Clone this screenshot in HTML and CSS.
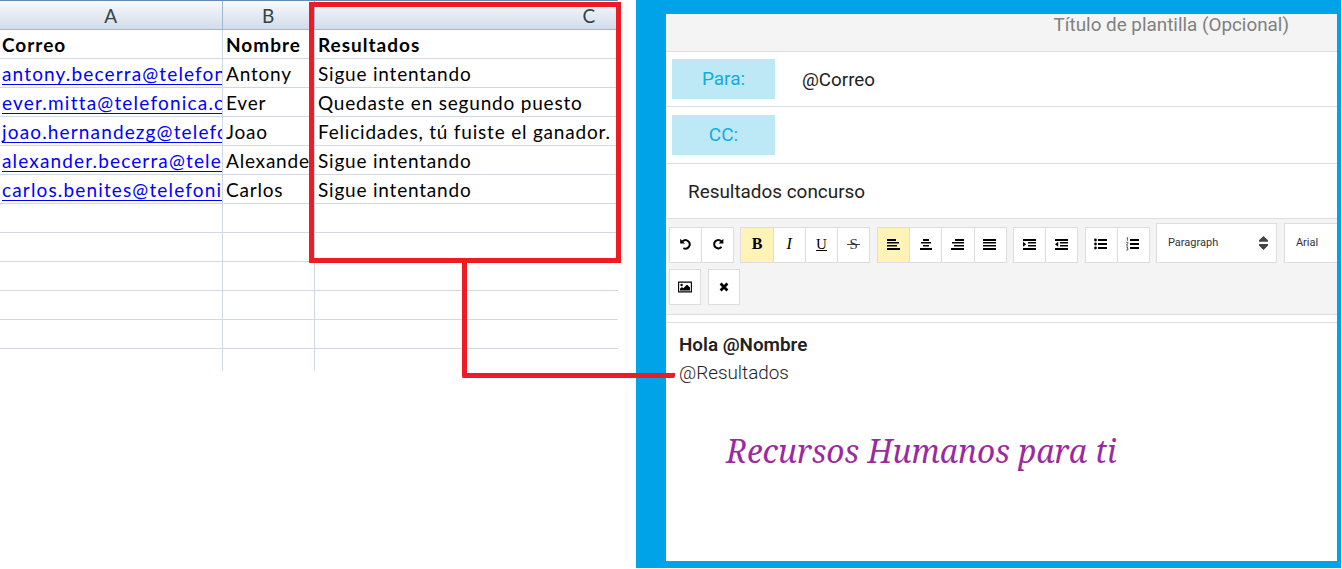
FILE: index.html
```html
<!DOCTYPE html>
<html lang="es">
<head>
<meta charset="utf-8">
<title>Resultados concurso</title>
<link rel="stylesheet" href="styles.css">
</head>
<body>
<main class="page">
  <section class="sheet">
    <div class="row head"><div class="cell">A</div><div class="cell">B</div><div class="cell col-c">C</div></div>
    <div class="row titles"><div class="cell">Correo</div><div class="cell">Nombre</div><div class="cell">Resultados</div></div>
    <div class="row"><div class="cell"><a class="mail">antony.becerra@telefon</a></div><div class="cell">Antony</div><div class="cell">Sigue intentando</div></div>
    <div class="row"><div class="cell"><a class="mail wide">ever.mitta@telefonica.c</a></div><div class="cell">Ever</div><div class="cell">Quedaste en segundo puesto</div></div>
    <div class="row"><div class="cell"><a class="mail">joao.hernandezg@telefo</a></div><div class="cell">Joao</div><div class="cell">Felicidades, tú fuiste el ganador.</div></div>
    <div class="row"><div class="cell"><a class="mail">alexander.becerra@telef</a></div><div class="cell">Alexande</div><div class="cell">Sigue intentando</div></div>
    <div class="row"><div class="cell"><a class="mail">carlos.benites@telefonic</a></div><div class="cell">Carlos</div><div class="cell">Sigue intentando</div></div>
    <div class="row"><div class="cell"></div><div class="cell"></div><div class="cell"></div></div>
    <div class="row"><div class="cell"></div><div class="cell"></div><div class="cell"></div></div>
    <div class="row"><div class="cell"></div><div class="cell"></div><div class="cell"></div></div>
    <div class="row"><div class="cell"></div><div class="cell"></div><div class="cell"></div></div>
    <div class="row"><div class="cell"></div><div class="cell"></div><div class="cell"></div></div>
    <div class="row last"><div class="cell"></div><div class="cell"></div><div class="cell"></div></div>
  </section>

  <section class="frame">
    <div class="mailer">
      <header class="title"><span>Título de plantilla (Opcional)</span></header>
      <div class="field to"><span class="tag">Para:</span><span class="value">@Correo</span></div>
      <div class="field cc"><span class="tag">CC:</span></div>
      <div class="subject"><span>Resultados concurso</span></div>
      <div class="toolbar">
        <div class="tools">
          <div class="group two">
            <button><svg width="14" height="14" viewBox="0 0 14 14"><path d="M3.6 4.3A4.2 4.2 0 1 1 4.4 11.1" class="ln"/><path d="M1.2 1.8v4.8H6z"/></svg></button>
            <button><svg width="14" height="14" viewBox="0 0 14 14"><path d="M10.4 4.3A4.2 4.2 0 1 0 10.6 9.9" class="ln"/><path d="M12.4 1.8v4.8H7.6z"/></svg></button>
          </div>
          <div class="group four">
            <button class="on glyph b">B</button><button class="glyph i">I</button><button class="glyph u">U</button><button class="glyph s">S</button>
          </div>
          <div class="group four">
            <button class="on"><svg width="14" height="12" viewBox="0 0 14 12"><path d="M1 1h9v2H1zM1 4h12v1.6H1zM1 7h10v1.6H1zM1 10h13v2H1z"/></svg></button>
            <button><svg width="14" height="12" viewBox="0 0 14 12"><path d="M4 1h6v2H4zM2 4h10v1.6H2zM4 7h6v1.6H4zM1 10h12v2H1z"/></svg></button>
            <button><svg width="14" height="12" viewBox="0 0 14 12"><path d="M4 1h9v2H4zM1 4h12v1.6H1zM3 7h10v1.6H3zM0 10h13v2H0z"/></svg></button>
            <button><svg width="14" height="12" viewBox="0 0 14 12"><path d="M0 1h13v2H0zM0 4h13v1.6H0zM0 7h13v1.6H0zM0 10h13v2H0z"/></svg></button>
          </div>
          <div class="group two">
            <button><svg width="14" height="12" viewBox="0 0 14 12"><path d="M0 1h13v2H0zM5 4h8v1.6H5zM5 7h8v1.6H5zM0 10h13v2H0zM0 3.7v5L3.2 6.2z"/></svg></button>
            <button><svg width="14" height="12" viewBox="0 0 14 12"><path d="M0 1h13v2H0zM5 4h8v1.6H5zM5 7h8v1.6H5zM0 10h13v2H0zM3.2 3.7v5L0 6.2z"/></svg></button>
          </div>
          <div class="group two">
            <button><svg width="14" height="12" viewBox="0 0 14 12"><path d="M4 1h9v2H4zM4 5h9v2H4zM4 9h9v2H4z"/><circle cx="1.5" cy="2" r="1.4"/><circle cx="1.5" cy="6" r="1.4"/><circle cx="1.5" cy="10" r="1.4"/></svg></button>
            <button><svg width="14" height="14" viewBox="0 0 14 14"><path d="M4 2h9v2H4zM4 6h9v2H4zM4 10h9v2H4z"/><path d="M.6 1.2L1.6.6v3.2M.3 5.4h1.6v1L.4 8.2h1.7M.3 10h1.6l-.8 1.2 1 .5-.4 1.4H.2" class="thin"/></svg></button>
          </div>
          <div class="select"><span class="opt">Paragraph</span><svg width="9" height="14" viewBox="0 0 9 14"><path d="M4.5 0L9 4.3v1.5H0V4.3zM0 8h9v1.5L4.5 14 0 9.5z" fill="#444"/></svg></div>
          <div class="select"><span class="opt">Arial</span></div>
        </div>
        <div class="tools second">
          <div class="group one"><button><svg width="14" height="12" viewBox="0 0 14 12"><path d="M.6 1.1h12.8v9.8H.6z" fill="none" stroke="#000" stroke-width="1.1"/><circle cx="3.6" cy="4" r="1.2"/><path d="M2 9.5V7.8L4 6l1.3 1.2L9 3.6l3 3v2.9z"/></svg></button></div>
          <div class="group one"><button><svg width="10" height="10" viewBox="0 0 10 10"><path d="M1.6 1.6l6.8 6.8M8.4 1.6L1.6 8.4" stroke="#000" stroke-width="2.8"/></svg></button></div>
        </div>
      </div>
      <article class="body">
        <p class="hello">Hola @Nombre</p>
        <p class="result">@Resultados</p>
        <p class="sign">Recursos Humanos para ti</p>
      </article>
    </div>
  </section>

  <div class="callout"></div>
  <div class="connector"></div>
</main>
</body>
</html>
```
FILE: styles.css
```css
* { box-sizing: border-box; }
body { margin: 0; background: #fff; font-family: Roboto, sans-serif; }
p { margin: 0; }
.page { position: relative; display: flex; align-items: flex-start; width: 1342px; height: 569px; overflow: hidden; }

/* spreadsheet */
.sheet { width: 618px; margin-right: 18px; flex: none; font: 19px/28px Lato, sans-serif; letter-spacing: .8px; color: #000; }
.row { display: grid; grid-template-columns: 223px 92px 303px; height: 29px; }
.cell { padding: 1px 0 0 3px; overflow: hidden; white-space: nowrap; border-right: 1px solid #d0d7e5; border-bottom: 1px solid #d0d7e5; }
.cell:first-child { padding-left: 2px; }
.cell:last-child { border-right: 0; }
.head { height: 30px; border-top: 1px solid #6489b4; background: linear-gradient(#f7f9fc, #d3dbe8); color: #2f4548; }
.head .cell, .head .cell:first-child { padding: 0; text-align: center; border-color: #9eb6ce; line-height: 29px; }
.head .cell.col-c { text-align: right; padding-right: 22px; }
.titles { font-weight: bold; letter-spacing: 1px; }
.last { height: 22px; }
.last .cell { border-bottom: 0; }
.mail { color: #00f; letter-spacing: 1.15px; text-decoration: underline; text-decoration-thickness: 1px; text-underline-offset: 3px; text-decoration-skip-ink: none; }
.mail.wide { letter-spacing: 1.2px; }

/* mail composer */
.frame { width: 705px; height: 568px; flex: none; padding: 14px 4px 7px 30px; background: #00a2e8; }
.mailer { height: 547px; background: #fff; overflow: hidden; }
.title { height: 38px; background: #f4f4f4; border-bottom: 1px solid #ddd; padding: 0 48px 0 0; text-align: right; font-size: 18.85px; line-height: 22px; color: #808080; }
.field { display: flex; height: 55px; padding: 7px 6px; border-bottom: 1px solid #ddd; font-size: 19px; color: #222; }
.cc { height: 57px; padding-top: 8px; }
.tag { width: 103px; height: 40px; line-height: 39px; text-align: center; background: #bde9f6; color: #10ace0; }
.value { margin-left: 27px; font-size: 18.8px; line-height: 42px; }
.subject { height: 55px; padding-left: 22px; border-bottom: 1px solid #ddd; font-size: 18.9px; line-height: 56px; color: #222; }
.toolbar { height: 96px; padding: 4px 0 0 3px; background: #f4f4f4; border-bottom: 1px solid #ddd; overflow: hidden; }
.tools { display: flex; align-items: flex-end; gap: 6.4px; height: 40px; }
.second { height: 36px; margin-top: 6px; gap: 7px; }
.group { display: flex; flex: none; height: 36px; background: #fff; border: 1px solid #ddd; }
.one { width: 32px; }
.two { width: 65px; }
.four { width: 130px; }
button { display: flex; flex: 1; align-items: center; justify-content: center; min-width: 0; padding: 0; border: 0; border-left: 1px solid #ddd; background: #fff; color: #000; }
.tools:not(.second) button { padding-bottom: 2px; }
button:first-child { border-left: 0; }
button.on { background: #fff3b8; }
.ln { fill: none; stroke: #000; stroke-width: 2; }
.thin { fill: none; stroke: #333; stroke-width: .8; }
.glyph { font: 15px "Liberation Serif", serif; }
.b { font-weight: bold; font-size: 16px; }
.i { font-style: italic; font-size: 16px; }
.u { text-decoration: underline; }
.s { color: #333; background: linear-gradient(#444, #444) center 16px / 13px 1px no-repeat #fff; }
.select { display: flex; flex: none; align-items: center; justify-content: space-between; width: 121px; height: 40px; padding: 0 8px 0 11px; border: 1px solid #ddd; background: #fff; font-size: 11px; color: #333; }
.select + .select { margin-left: .6px; }
.opt { padding-bottom: 2px; }
.body { margin-top: 7px; border-top: 1px solid #ddd; padding: 8px 0 0 13px; color: #222; }
.hello { font-size: 18.85px; line-height: 28px; font-weight: 600; }
.result { font-size: 18.85px; line-height: 28px; font-weight: 300; }
.sign { margin: 36px 0 0 47px; font: italic 33px/56px "Noto Serif", "Liberation Serif", serif; color: #9b2aa0; white-space: nowrap; transform: scaleX(.958); transform-origin: left; }

/* highlight drawn over the sheet, linked to the message */
.callout { position: absolute; left: 309px; top: 2px; width: 312px; height: 261px; border: 5px solid #ed1c24; }
.connector { position: absolute; left: 462px; top: 262px; width: 213px; height: 116px; border: solid #ed1c24; border-width: 0 0 5px 5px; border-radius: 0 0 2px 2px; }
```
